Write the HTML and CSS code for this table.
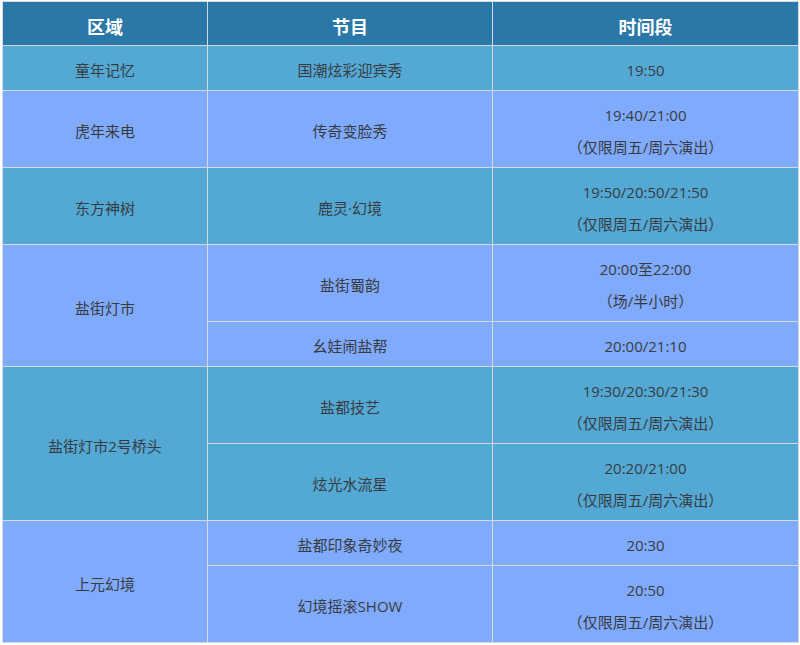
FILE: index.html
```html
<!DOCTYPE html>
<html lang="zh-CN">
<head>
<meta charset="utf-8">
<title>演出时间表</title>
<link rel="stylesheet" href="styles.css">
</head>
<body>
<div class="wrap">
<table class="sched">
  <colgroup>
    <col class="c1"><col class="c2"><col class="c3">
  </colgroup>
  <thead>
    <tr class="head"><th>区域</th><th>节目</th><th>时间段</th></tr>
  </thead>
  <tbody>
    <tr class="a"><td>童年记忆</td><td>国潮炫彩迎宾秀</td><td>19:50</td></tr>
    <tr class="b"><td>虎年来电</td><td>传奇变脸秀</td><td><p>19:40/21:00</p><p>（仅限周五/周六演出）</p></td></tr>
    <tr class="a"><td>东方神树</td><td>鹿灵·幻境</td><td><p>19:50/20:50/21:50</p><p>（仅限周五/周六演出）</p></td></tr>
    <tr class="b"><td rowspan="2">盐街灯市</td><td>盐街蜀韵</td><td><p>20:00至22:00</p><p>（场/半小时）</p></td></tr>
    <tr class="b"><td>幺娃闹盐帮</td><td>20:00/21:10</td></tr>
    <tr class="a"><td rowspan="2">盐街灯市2号桥头</td><td>盐都技艺</td><td><p>19:30/20:30/21:30</p><p>（仅限周五/周六演出）</p></td></tr>
    <tr class="a"><td>炫光水流星</td><td><p>20:20/21:00</p><p>（仅限周五/周六演出）</p></td></tr>
    <tr class="b"><td rowspan="2">上元幻境</td><td>盐都印象奇妙夜</td><td>20:30</td></tr>
    <tr class="b"><td>幻境摇滚SHOW</td><td><p>20:50</p><p>（仅限周五/周六演出）</p></td></tr>
  </tbody>
</table>
</div>
</body>
</html>
```
FILE: styles.css
```css
html, body {
  margin: 0;
  padding: 0;
  background: #ffffff;
}
.wrap {
  padding: 1px 2px 0 2px;
}
.sched {
  width: 796px;
  border-collapse: collapse;
  table-layout: fixed;
  font-family: "Open Sans", "Noto Sans CJK SC", "Microsoft YaHei", sans-serif;
  font-size: 15px;
  color: #383c42;
}
.c1 { width: 205px; }
.c2 { width: 285px; }
.c3 { width: 306px; }
.sched th, .sched td {
  border: 1px solid #d3dae2;
  text-align: center;
  vertical-align: middle;
  padding: 8px 4px 4px 4px;
  line-height: 32px;
}
.sched th {
  background: #2a78a8;
  color: #ffffff;
  font-size: 18px;
  font-weight: bold;
  line-height: 31px;
  padding: 10px 4px 2px 4px;
}
.sched p {
  margin: 0;
}
.a td { background: #53a8d4; }
.b td { background: #80aafc; }
```
